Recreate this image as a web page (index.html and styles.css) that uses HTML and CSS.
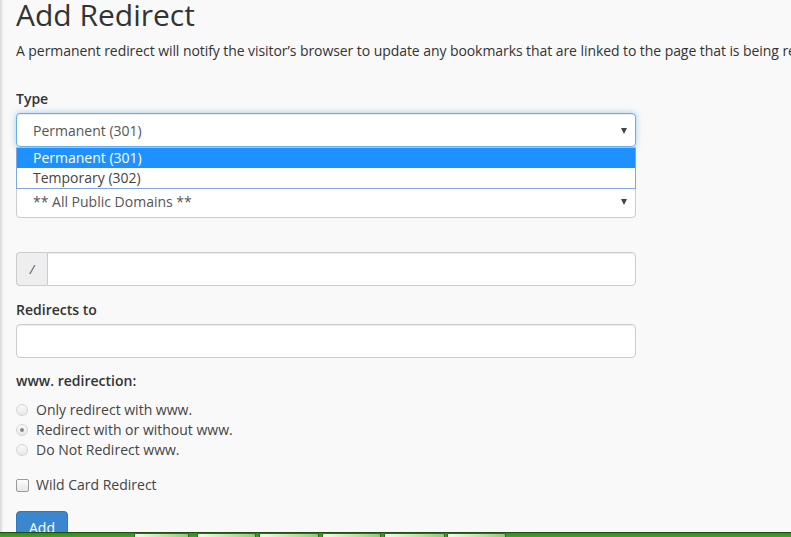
FILE: index.html
```html
<!DOCTYPE html>
<html lang="en">
<head>
<meta charset="utf-8">
<title>Add Redirect</title>
<link rel="stylesheet" href="styles.css">
</head>
<body>
<div class="page">
  <main class="content">
    <h1 class="title">Add Redirect</h1>
    <p class="intro">A permanent redirect will notify the visitor’s browser to update any bookmarks that are linked to the page that is being redirected.</p>

    <form class="form">
      <div class="group group-type">
        <label class="label">Type</label>
        <div class="select select-focus">
          <span class="select-text">Permanent (301)</span>
          <span class="caret"></span>
        </div>
        <ul class="dropdown">
          <li class="option option-active">Permanent (301)</li>
          <li class="option">Temporary (302)</li>
        </ul>
      </div>

      <div class="group">
        <div class="label-spacer"></div>
        <div class="select">
          <span class="select-text">** All Public Domains **</span>
          <span class="caret"></span>
        </div>
      </div>

      <div class="group group-path">
        <div class="input-group">
          <span class="addon">/</span>
          <span class="input input-joined"></span>
        </div>
      </div>

      <div class="group">
        <label class="label">Redirects to</label>
        <span class="input"></span>
      </div>

      <div class="group">
        <label class="label">www. redirection:</label>
        <div class="radios">
          <div class="choice"><span class="radio"></span><span>Only redirect with www.</span></div>
          <div class="choice"><span class="radio radio-checked"></span><span>Redirect with or without www.</span></div>
          <div class="choice"><span class="radio"></span><span>Do Not Redirect www.</span></div>
        </div>
      </div>

      <div class="group group-check">
        <div class="choice"><span class="checkbox"></span><span>Wild Card Redirect</span></div>
      </div>

      <div class="actions">
        <span class="btn">Add</span>
      </div>
    </form>
  </main>
  <footer class="taskbar">
    <span class="task task-1"></span>
    <span class="task task-2"></span>
    <span class="task task-3"></span>
    <span class="task task-4"></span>
    <span class="task task-5"></span>
    <span class="task task-6"></span>
  </footer>
</div>
</body>
</html>
```

FILE: styles.css
```css
* { box-sizing: border-box; }

html, body {
  margin: 0;
  padding: 0;
  height: 100%;
  overflow: hidden;
}

body {
  font-family: "Open Sans", "DejaVu Sans", sans-serif;
  font-size: 14px;
  line-height: 20px;
  color: #333;
  background: #f9f9f9;
}

.page {
  display: flex;
  flex-direction: column;
  height: 100vh;
}

.content {
  flex: 1;
  min-height: 0;
  overflow: hidden;
  padding-left: 16px;
  background: linear-gradient(to right, #d6d6d6 0, #ececec 2px, #f9f9f9 4px);
}

.title {
  margin: 0;
  font-size: 30px;
  line-height: 29px;
  font-weight: 400;
  color: #333;
}

.intro {
  margin: 12px 0 0;
  white-space: nowrap;
  letter-spacing: -0.07px;
}

.form {
  margin-top: 28px;
  width: 620px;
}

.group {
  position: relative;
  margin-bottom: 13px;
}

.group-path {
  margin-top: 34px;
  margin-bottom: 14px;
}

.label {
  display: block;
  font-weight: 600;
  margin-bottom: 4px;
}

.label-spacer {
  height: 24px;
}

.select {
  display: flex;
  align-items: center;
  justify-content: space-between;
  height: 34px;
  padding: 2px 8px 0 16px;
  background: #fff;
  border: 1px solid #ccc;
  border-radius: 4px;
  color: #555;
  box-shadow: inset 0 1px 1px rgba(0, 0, 0, 0.075);
}

.select-focus {
  border-color: #66afe9;
  box-shadow: inset 0 1px 1px rgba(0, 0, 0, 0.075), 0 0 6px rgba(102, 175, 233, 0.6);
}

.caret {
  width: 0;
  height: 0;
  border-left: 3.5px solid transparent;
  border-right: 3.5px solid transparent;
  border-top: 6px solid #444;
}

.dropdown {
  position: absolute;
  left: 0;
  right: 0;
  top: 58px;
  z-index: 5;
  margin: 0;
  padding: 0;
  list-style: none;
  background: #fff;
  border: 1px solid #7fa7df;
  border-top-color: #a9c6ec;
}

.option {
  height: 20px;
  line-height: 20px;
  padding-left: 16px;
  color: #444;
}

.option-active {
  background: #1e90ff;
  color: #fff;
}

.input-group {
  display: flex;
}

.addon {
  width: 31px;
  height: 34px;
  display: flex;
  align-items: center;
  justify-content: center;
  background: #eee;
  border: 1px solid #ccc;
  border-right: 0;
  border-radius: 4px 0 0 4px;
  color: #555;
  font-size: 13px;
  font-style: italic;
}

.input {
  display: block;
  height: 34px;
  background: #fff;
  border: 1px solid #ccc;
  border-radius: 4px;
  box-shadow: inset 0 1px 1px rgba(0, 0, 0, 0.075);
}

.input-joined {
  flex: 1;
  border-radius: 0 4px 4px 0;
}

.radios {
  margin-top: 9px;
}

.choice {
  display: flex;
  align-items: center;
  height: 20px;
  color: #444;
}

.radio {
  width: 12px;
  height: 12px;
  margin: 0 8px 0 0;
  border: 1px solid #d4d4d4;
  border-radius: 50%;
  background: linear-gradient(#fbfbfb, #e8e8e8);
  display: flex;
  align-items: center;
  justify-content: center;
}

.radio-checked::after {
  content: "";
  width: 4px;
  height: 4px;
  border-radius: 50%;
  background: #888;
}

.group-check {
  margin-top: 15px;
  margin-bottom: 16px;
}

.checkbox {
  width: 13px;
  height: 13px;
  margin: 0 7px 0 0;
  border: 1px solid #9a9a9a;
  border-radius: 2px;
  background: linear-gradient(#fdfdfd, #e6e6e6);
}

.actions {
  display: flex;
}

.btn {
  display: inline-block;
  padding: 6px 12px;
  width: 52px;
  height: 34px;
  text-align: center;
  color: #fff;
  background: #3a87cf;
  border: 1px solid #2f78be;
  border-radius: 4px;
}

.taskbar {
  flex: none;
  display: flex;
  height: 5px;
  padding-left: 134px;
  background: linear-gradient(#2f8a1c, #3fa52a);
  border-top: 1px solid #1f4d12;
}

.task {
  height: 100%;
  border: 1px solid #2e6b1f;
  border-bottom: 0;
  border-radius: 2px 2px 0 0;
  background: linear-gradient(to right, #f3fbf0, #b9e0a8 60%, #8fcb77);
}

.task-1 { width: 55px; margin-right: 8px; }
.task-2 { width: 59px; margin-right: 3px; }
.task-3 { width: 60px; margin-right: 3px; }
.task-4 { width: 59px; margin-right: 3px; }
.task-5 { width: 61px; margin-right: 2px; }
.task-6 { width: 59px; }
```
